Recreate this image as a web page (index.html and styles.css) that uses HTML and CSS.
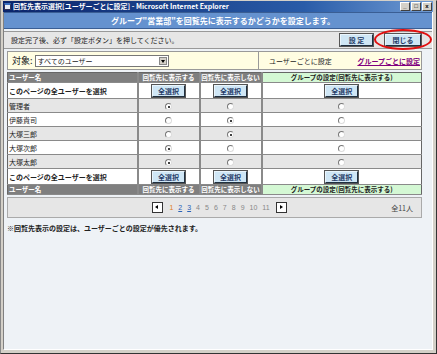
FILE: index.html
```html
<!DOCTYPE html>
<html lang="ja">
<head>
    <meta charset="UTF-8">
    <title>回覧先表示選択</title>
    <link rel="stylesheet" href="styles.css">
</head>
<body>
    <div class="window">
        <div class="titlebar">
            <span class="app-icon"></span>
            <span class="title">回覧先表示選択[ユーザーごとに設定] - Microsoft Internet Explorer</span>
            <div class="winbtns">
                <span class="wb">_</span><span class="wb">□</span><span class="wb">x</span>
            </div>
        </div>
        <div class="client">
            <div class="caption">グループ"営業部"を回覧先に表示するかどうかを設定します。</div>
            <div class="msgbar">
                <span>設定完了後、必ず「設定ボタン」を押してください。</span>
                <div class="btns">
                    <button class="btn">設 定</button>
                    <button class="btn close">閉じる</button>
                    <span class="mark"></span>
                </div>
            </div>
            <div class="content">
                <div class="filter">
                    <div class="target">
                        <span class="label">対象:</span>
                        <div class="select"><span>すべてのユーザー</span><span class="arrow"></span></div>
                    </div>
                    <div class="modes">
                        <span>ユーザーごとに設定</span>
                        <a href="#">グループごとに設定</a>
                    </div>
                </div>
                <table class="list">
                    <colgroup>
                        <col style="width:130px"><col style="width:62px"><col style="width:62px"><col>
                    </colgroup>
                    <tr class="head">
                        <th class="name">ユーザー名</th><th>回覧先に表示する</th><th>回覧先に表示しない</th><th class="group">グループの設定(回覧先に表示する)</th>
                    </tr>
                    <tr class="all">
                        <td class="name">このページの全ユーザーを選択</td>
                        <td><button class="btn">全選択</button></td><td><button class="btn">全選択</button></td><td><button class="btn">全選択</button></td>
                    </tr>
                    <tr class="odd"><td class="name">管理者</td><td><span class="radio on"></span></td><td><span class="radio"></span></td><td><span class="radio"></span></td></tr>
                    <tr><td class="name">伊藤貴司</td><td><span class="radio"></span></td><td><span class="radio on"></span></td><td><span class="radio"></span></td></tr>
                    <tr class="odd"><td class="name">大塚三郎</td><td><span class="radio"></span></td><td><span class="radio on"></span></td><td><span class="radio"></span></td></tr>
                    <tr><td class="name">大塚次郎</td><td><span class="radio on"></span></td><td><span class="radio"></span></td><td><span class="radio"></span></td></tr>
                    <tr class="odd"><td class="name">大塚太郎</td><td><span class="radio on"></span></td><td><span class="radio"></span></td><td><span class="radio"></span></td></tr>
                    <tr class="all">
                        <td class="name">このページの全ユーザーを選択</td>
                        <td><button class="btn">全選択</button></td><td><button class="btn">全選択</button></td><td><button class="btn">全選択</button></td>
                    </tr>
                    <tr class="head">
                        <th class="name">ユーザー名</th><th>回覧先に表示する</th><th>回覧先に表示しない</th><th class="group">グループの設定(回覧先に表示する)</th>
                    </tr>
                </table>
                <div class="pager">
                    <div class="pages">
                        <span class="pbtn prev"></span>
                        <span class="cur">1</span>
                        <a href="#">2</a>
                        <a href="#">3</a>
                        <span>4</span><span>5</span><span>6</span><span>7</span><span>8</span><span>9</span><span>10</span><span>11</span>
                        <span class="pbtn next"></span>
                    </div>
                    <span class="total">全11人</span>
                </div>
                <p class="note">※回覧先表示の設定は、ユーザーごとの設定が優先されます。</p>
            </div>
        </div>
    </div>
</body>
</html>
```

FILE: styles.css
```css
body {
    margin: 0;
    font-family: "Noto Sans CJK JP", "Liberation Sans", sans-serif;
    font-size: 7px;
    color: #222;
    background: #fff;
}
.window {
    width: 437px;
    height: 354px;
    box-sizing: border-box;
    border: 1px solid #333;
    border-top-color: #d4d0c8;
    border-left-color: #888;
    background: #d4d0c8;
    padding: 0 3px 3px 2px;
    display: flex;
    flex-direction: column;
}
.titlebar {
    height: 11px;
    background: linear-gradient(to right, #0a246a, #2a5ca8 70%, #6f9bd4);
    display: flex;
    align-items: center;
    gap: 2px;
    padding: 0 1px;
    color: #fff;
    font-weight: bold;
}
.app-icon {
    width: 7px;
    height: 7px;
    background: #e8eef8;
    border: 1px solid #335;
    box-sizing: border-box;
    border-top: 2px solid #3a6fc0;
}
.title {
    flex: 1;
    white-space: nowrap;
    font-size: 7px;
    line-height: 11px;
}
.winbtns {
    display: flex;
}
.wb {
    width: 8px;
    height: 7px;
    margin-left: 1px;
    background: #d4d0c8;
    border: 1px solid;
    border-color: #fff #404040 #404040 #fff;
    color: #000;
    font-size: 6px;
    line-height: 6px;
    text-align: center;
    font-family: "Liberation Sans", sans-serif;
}
.client {
    flex: 1;
    background: #eef2f6;
    border: 1px solid #808080;
    border-top: none;
    border-right-color: #fff;
    border-bottom-color: #fff;
    display: flex;
    flex-direction: column;
}
.caption {
    height: 15px;
    background: #6592cf;
    border-top: 1px solid #3a5e94;
    border-bottom: 1px solid #3a5e94;
    color: #fff;
    font-size: 8px;
    line-height: 15px;
    text-align: center;
    font-weight: bold;
    padding-left: 10px;
}
.msgbar {
    height: 16px;
    margin-top: 2px;
    background: #e6e6e6;
    border-top: 1px solid #999;
    border-bottom: 1px solid #999;
    display: flex;
    align-items: center;
    justify-content: space-between;
    padding-left: 7px;
}
.btns {
    display: flex;
    gap: 12px;
    padding-right: 11px;
    position: relative;
}
.btn {
    font-family: inherit;
    font-size: 7px;
    font-weight: bold;
    color: #1f3a66;
    background: #cfe6f5;
    border: 1px solid;
    border-color: #eaf5fc #203040 #203040 #eaf5fc;
    outline: 1px solid #555;
    height: 12px;
    padding: 0;
    width: 33px;
    line-height: 10px;
    margin: 0;
}
.btn.close {
    width: 36px;
}
.mark {
    position: absolute;
    right: 0;
    top: -5px;
    width: 58px;
    height: 21px;
    border: 2px solid #e01010;
    border-radius: 50%;
    box-sizing: border-box;
}
.content {
    padding: 2px 10px 0 3px;
}
.filter {
    height: 17px;
    background: #fffde2;
    border: 1px solid #999;
    display: flex;
    align-items: center;
}
.target {
    width: 251px;
    height: 100%;
    border-right: 1px solid #999;
    display: flex;
    align-items: center;
    gap: 2px;
    padding-left: 4px;
    box-sizing: border-box;
}
.label {
    font-size: 9px;
}
.select {
    width: 130px;
    height: 10px;
    background: #fff;
    border: 1px solid #777;
    display: flex;
    justify-content: space-between;
    align-items: center;
    padding-left: 2px;
    line-height: 10px;
}
.arrow {
    width: 8px;
    height: 8px;
    margin-right: 1px;
    background: #d4d0c8;
    border: 1px solid #888;
    box-sizing: border-box;
    position: relative;
}
.arrow::after {
    content: "";
    position: absolute;
    left: 1px;
    top: 2px;
    border: 2px solid transparent;
    border-top: 3px solid #000;
}
.modes {
    flex: 1;
    display: flex;
    justify-content: space-between;
    padding: 0 1px 0 10px;
}
.modes a {
    color: #800080;
    font-weight: bold;
}
.list {
    width: 100%;
    margin-top: 2px;
    border-collapse: collapse;
    border: 1px solid #666;
    table-layout: fixed;
    background: #fff;
}
.list th, .list td {
    padding: 0;
    text-align: center;
    border-left: 2px solid #8a8a8a;
    border-bottom: 1px solid #8a8a8a;
    white-space: nowrap;
    overflow: hidden;
}
.list .name {
    text-align: left;
    padding-left: 1px;
    border-left: none;
}
.head th {
    height: 9px;
    line-height: 9px;
    font-size: 6.5px;
    background: #7f7f7f;
    color: #fff;
    font-weight: bold;
}
.head th.group {
    background: #d4f8d4;
    color: #222;
}
.all td {
    height: 15px;
}
.all td.name {
    font-weight: bold;
}
.list tr:not(.head):not(.all) td {
    height: 13px;
}
.list tr.odd td {
    background: #e6e6e6;
}
.radio {
    display: inline-block;
    width: 5px;
    height: 5px;
    border: 1px solid #777;
    border-right-color: #ddd;
    border-bottom-color: #ddd;
    border-radius: 50%;
    background: #fff;
    vertical-align: middle;
    position: relative;
}
.radio.on::after {
    content: "";
    position: absolute;
    left: 1.5px;
    top: 1.5px;
    width: 2px;
    height: 2px;
    border-radius: 50%;
    background: #000;
}
.pager {
    height: 19px;
    margin-top: 2px;
    background: #e6e6e6;
    border: 1px solid #aaa;
    position: relative;
    display: flex;
    align-items: center;
    justify-content: center;
}
.pages {
    display: flex;
    align-items: center;
    gap: 5px;
    color: #888;
    font-size: 7px;
    font-family: "Liberation Sans", sans-serif;
    margin-left: 10px;
}
.pages a {
    color: #2a62b8;
}
.pages .cur {
    color: #e0801a;
}
.pbtn {
    width: 9px;
    height: 9px;
    background: #fff;
    border: 1px solid #333;
    position: relative;
    margin: 0 1px;
}
.pbtn::after {
    content: "";
    position: absolute;
    top: 2px;
    border: 2.5px solid transparent;
}
.prev::after {
    left: 0;
    border-right: 3px solid #000;
}
.next::after {
    left: 3px;
    border-left: 3px solid #000;
}
.total {
    position: absolute;
    right: 8px;
    color: #444;
}
.note {
    margin: 5px 0 0;
    font-weight: bold;
}
```
